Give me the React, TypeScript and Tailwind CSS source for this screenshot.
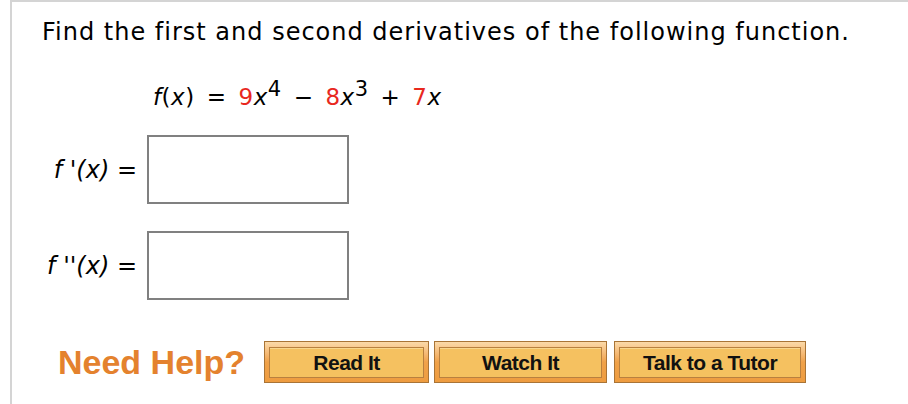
import React from "react";

const red = "text-[#e8281e]";

function HelpButton({ label, width }: { label: string; width: string }) {
  return (
    <div
      className={`${width} h-[42px] border border-[#a97436] bg-gradient-to-b from-[#fbd9a8] via-[#f0a24a] to-[#ee9c40] p-[4px] pt-[5px]`}
    >
      <div className="h-full border border-[#b9803f] bg-[#f5c160] flex items-center justify-center shadow-[inset_0_1px_0_#f9d68c]">
        <span className="font-['Liberation_Sans',Arial,sans-serif] font-bold text-[21px] text-[#111] tracking-[-0.5px]">
          {label}
        </span>
      </div>
    </div>
  );
}

export default function App() {
  return (
    <div className="w-[908px] h-[404px] bg-white overflow-hidden">
      <div className="ml-[10px] h-full border-l-2 border-t-2 border-[#d4d4d4] font-['DejaVu_Sans',Verdana,sans-serif] text-black">
        <div className="pl-[30px] pt-[16px]">
          <p className="text-[24px] leading-[28px] tracking-[1px]">
            Find the first and second derivatives of the following function.
          </p>

          <div className="pl-[111px] mt-[37px] text-[23px] leading-[28px] tracking-[0.5px] flex items-baseline">
            <i>f</i>(<i>x</i>)<span className="mx-[12px]">=</span>
            <span className={red}>9</span>
            <i>x</i>
            <sup className="text-[21px] top-[-9px]">4</sup>
            <span className="mx-[12px]">−</span>
            <span className={red}>8</span>
            <i>x</i>
            <sup className="text-[21px] top-[-9px]">3</sup>
            <span className="mx-[12px]">+</span>
            <span className={red}>7</span>
            <i>x</i>
          </div>

          <div className="mt-[24px] flex flex-col gap-[27px]">
            <div className="flex items-center">
              <span className="w-[105px] text-right pr-[10px] text-[24px] italic">
                f '(x) <span className="not-italic">=</span>
              </span>
              <div className="w-[202px] h-[69px] border-2 border-[#808080] bg-white" />
            </div>
            <div className="flex items-center">
              <span className="w-[105px] text-right pr-[10px] text-[24px] italic">
                f ''(x) <span className="not-italic">=</span>
              </span>
              <div className="w-[202px] h-[69px] border-2 border-[#808080] bg-white" />
            </div>
          </div>

          <div className="mt-[41px] ml-[16px] flex items-center">
            <span className="font-['Liberation_Sans',Arial,sans-serif] font-bold text-[34px] leading-[40px] text-[#e4822e] mr-[19px]">
              Need Help?
            </span>
            <div className="flex gap-[5px]">
              <HelpButton label="Read It" width="w-[165px]" />
              <HelpButton label="Watch It" width="w-[173px]" />
              <div className="ml-[2px]">
                <HelpButton label="Talk to a Tutor" width="w-[192px]" />
              </div>
            </div>
          </div>
        </div>
      </div>
    </div>
  );
}
